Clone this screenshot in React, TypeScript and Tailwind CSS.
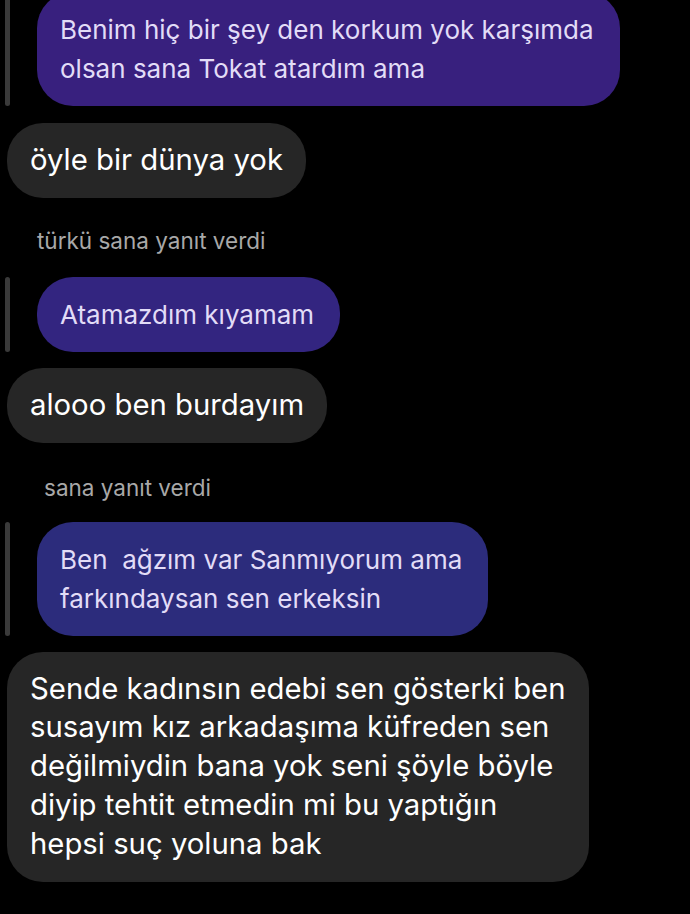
import React from 'react'

type Msg =
  | { kind: 'reply'; lines: string[]; color: string; className?: string }
  | { kind: 'them'; lines: string[]; className?: string }
  | { kind: 'label'; text: string; className: string }

const MESSAGES: Msg[] = [
  {
    kind: 'reply',
    lines: ['Benim hiç bir şey den korkum yok karşımda', 'olsan sana Tokat atardım ama'],
    color: 'bg-[#38207e]',
    className: '-mt-[8px]',
  },
  { kind: 'them', lines: ['öyle bir dünya yok'], className: 'mt-[17px]' },
  { kind: 'label', text: 'türkü sana yanıt verdi', className: 'mt-[31px] mb-[24px] pl-[37px]' },
  { kind: 'reply', lines: ['Atamazdım kıyamam'], color: 'bg-[#332580]' },
  { kind: 'them', lines: ['alooo ben burdayım'], className: 'mt-[16px]' },
  { kind: 'label', text: 'sana yanıt verdi', className: 'mt-[33px] mb-[22px] pl-[44px]' },
  {
    kind: 'reply',
    lines: ['Ben  ağzım var Sanmıyorum ama', 'farkındaysan sen erkeksin'],
    color: 'bg-[#2c2c7c]',
  },
  {
    kind: 'them',
    lines: [
      'Sende kadınsın edebi sen gösterki ben',
      'susayım kız arkadaşıma küfreden sen',
      'değilmiydin bana yok seni şöyle böyle',
      'diyip tehtit etmedin mi bu yaptığın',
      'hepsi suç yoluna bak',
    ],
    className: 'mt-[16px]',
  },
]

const Lines: React.FC<{ lines: string[] }> = ({ lines }) => (
  <>
    {lines.map((l, i) => (
      <span key={i} className="block whitespace-pre">
        {l}
      </span>
    ))}
  </>
)

export default function App() {
  return (
    <div
      className="h-[914px] w-[690px] overflow-hidden bg-black"
      style={{ fontFamily: 'Inter, "Noto Sans", sans-serif' }}
    >
      <div className="flex flex-col items-start">
        {MESSAGES.map((m, i) => {
          if (m.kind === 'label') {
            return (
              <p key={i} className={`text-[22.5px] leading-[24px] text-[#a8a8a8] ${m.className}`}>
                {m.text}
              </p>
            )
          }
          if (m.kind === 'reply') {
            return (
              <div key={i} className={`flex items-stretch ${m.className ?? ''}`}>
                {/* quoted-reply bar */}
                <div className="ml-[5px] w-[5px] rounded-full bg-[#3a3a3a]" />
                <div
                  className={`ml-[27px] rounded-[36px] ${m.color} pl-[23px] pr-[26px] py-[18px] text-[26px] leading-[39px] text-[#e2dcf7]`}
                >
                  <Lines lines={m.lines} />
                </div>
              </div>
            )
          }
          return (
            <div
              key={i}
              className={`ml-[7px] rounded-[36px] bg-[#262626] pl-[23px] pr-[23px] py-[18px] text-[29.3px] leading-[38.8px] text-white ${m.className ?? ''}`}
            >
              <Lines lines={m.lines} />
            </div>
          )
        })}
      </div>
    </div>
  )
}
